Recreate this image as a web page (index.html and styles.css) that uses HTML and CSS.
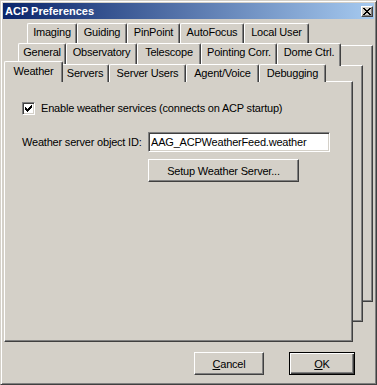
FILE: index.html
```html
<!DOCTYPE html>
<html lang="en">
  <head>
    <meta charset="UTF-8" />
    <meta name="viewport" content="width=device-width, initial-scale=1.0" />
    <title>ACP Preferences</title>
    <link rel="stylesheet" href="styles.css">
  </head>
  <body>
    <div class="window">
      <div class="titlebar">
        <span class="title">ACP Preferences</span>
        <button class="close" type="button">
          <svg width="8" height="7" viewBox="0 0 8 7" shape-rendering="crispEdges">
            <path d="M0 0h2v1H0zM6 0h2v1H6zM1 1h2v1H1zM5 1h2v1H5zM2 2h4v1H2zM3 3h2v1H3zM2 4h4v1H2zM1 5h2v1H1zM5 5h2v1H5zM0 6h2v1H0zM6 6h2v1H6z" />
          </svg>
        </button>
      </div>
      <div class="client">
        <div class="stack">
          <div class="layer layer-a">
            <div class="tabs row1">
              <div class="tab">Imaging</div>
              <div class="tab">Guiding</div>
              <div class="tab">PinPoint</div>
              <div class="tab">AutoFocus</div>
              <div class="tab">Local User</div>
            </div>
            <div class="sheet"></div>
          </div>
          <div class="layer layer-b">
            <div class="tabs row2">
              <div class="tab">General</div>
              <div class="tab">Observatory</div>
              <div class="tab">Telescope</div>
              <div class="tab">Pointing Corr.</div>
              <div class="tab">Dome Ctrl.</div>
            </div>
            <div class="sheet"></div>
          </div>
          <div class="layer layer-c">
            <div class="tabs row3">
              <div class="tab active">Weather</div>
              <div class="tab">Servers</div>
              <div class="tab">Server Users</div>
              <div class="tab">Agent/Voice</div>
              <div class="tab">Debugging</div>
            </div>
            <div class="sheet">
              <label class="check-row">
                <span class="checkbox">
                  <svg width="7" height="7" viewBox="0 0 7 7" shape-rendering="crispEdges">
                    <path d="M0 2h1v3H0zM1 3h1v3H1zM2 4h1v3H2zM3 3h1v3H3zM4 2h1v3H4zM5 1h1v3H5zM6 0h1v3H6z" />
                  </svg>
                </span>
                <span>Enable weather services (connects on ACP startup)</span>
              </label>
              <div class="field-row">
                <span class="field-label">Weather server object ID:</span>
                <input class="textbox" type="text" value="AAG_ACPWeatherFeed.weather">
              </div>
              <div class="setup-row">
                <button class="btn setup" type="button">Setup Weather Server...</button>
              </div>
            </div>
          </div>
        </div>
        <div class="footer">
          <button class="btn cancel" type="button"><u>C</u>ancel</button>
          <button class="btn ok default" type="button"><u>O</u>K</button>
        </div>
      </div>
    </div>
  </body>
</html>
```

FILE: styles.css
```css
* {
  margin: 0;
  padding: 0;
  box-sizing: border-box;
}

body {
  background: #d4d0c8;
  font-family: "Liberation Sans", Arial, sans-serif;
  font-size: 11px;
  letter-spacing: -0.2px;
  color: #000;
}

.window {
  width: 377px;
  height: 385px;
  display: flex;
  flex-direction: column;
  background: #d4d0c8;
  border: 1px solid;
  border-color: #d4d0c8 #404040 #404040 #d4d0c8;
  box-shadow: inset 1px 1px #ffffff, inset -1px -1px #808080;
  padding: 2px;
}

.titlebar {
  height: 16px;
  display: flex;
  align-items: center;
  justify-content: space-between;
  padding: 0 1px 0 2px;
  background: linear-gradient(to right, #0a246a, #a6caf0);
}

.title {
  color: #fff;
  font-weight: bold;
  letter-spacing: 0;
  line-height: 16px;
}

.close {
  width: 12px;
  height: 11px;
  display: flex;
  align-items: center;
  justify-content: center;
  background: #d4d0c8;
  border: 1px solid;
  border-color: #ffffff #404040 #404040 #ffffff;
  box-shadow: inset -1px -1px #808080;
}

.client {
  flex: 1;
  display: flex;
  flex-direction: column;
  padding: 4px 0 0 1px;
}

.stack {
  display: grid;
}

.layer {
  grid-area: 1 / 1;
  display: flex;
  flex-direction: column;
  align-self: start;
  justify-self: start;
  isolation: isolate;
}

.layer-a {
  margin-left: 20px;
}

.layer-b {
  margin: 20px 0 0 10px;
}

.layer-c {
  margin-top: 38px;
}

.tabs {
  display: grid;
  height: 22px;
  position: relative;
  z-index: 1;
}

.row1 {
  grid-template-columns: 50px 50px 53px 64px 65px;
  padding-left: 3px;
}

.row2 {
  grid-template-columns: 48px 71px 64px 76px 64px;
  padding-left: 4px;
}

.row3 {
  grid-template-columns: 55px 48px 77px 73px 67px;
  padding-left: 2px;
  height: 20px;
}

.tab {
  height: 23px;
  align-self: start;
  background: #d4d0c8;
  border-left: 1px solid #ffffff;
  border-top: 1px solid #ffffff;
  border-right: 1px solid #404040;
  box-shadow: inset -1px 0 #808080;
  border-radius: 2px 2px 0 0;
  padding-top: 2px;
  line-height: 13px;
  text-align: center;
  white-space: nowrap;
}

.row3 .tab {
  height: 18px;
  align-self: end;
}

.row3 .tab.active {
  height: 21px;
  align-self: start;
  margin: 0 -2px;
  padding-top: 3px;
  position: relative;
  z-index: 1;
}

.sheet {
  width: 349px;
  height: 257px;
  background: #d4d0c8;
  border: 1px solid;
  border-color: #ffffff #404040 #404040 #ffffff;
  box-shadow: inset -1px -1px #808080;
}

.layer-c .sheet {
  height: 261px;
  padding: 20px 0 0 17px;
}

.check-row {
  display: flex;
  align-items: center;
  gap: 6px;
  line-height: 13px;
}

.checkbox {
  width: 13px;
  height: 13px;
  display: flex;
  align-items: center;
  justify-content: center;
  background: #fff;
  border: 1px solid;
  border-color: #808080 #ffffff #ffffff #808080;
  box-shadow: inset 1px 1px #404040, inset -1px -1px #d4d0c8;
}

.field-row {
  display: flex;
  align-items: center;
  margin-top: 17px;
}

.field-label {
  width: 126px;
}

.textbox {
  width: 182px;
  height: 20px;
  padding: 0 2px;
  font: inherit;
  letter-spacing: inherit;
  color: #000;
  background: #fff;
  border: 1px solid;
  border-color: #808080 #ffffff #ffffff #808080;
  box-shadow: inset 1px 1px #404040, inset -1px -1px #d4d0c8;
  outline: none;
}

.setup-row {
  margin: 7px 0 0 126px;
}

.btn {
  height: 23px;
  font: inherit;
  letter-spacing: inherit;
  color: #000;
  background: #d4d0c8;
  border: 1px solid;
  border-color: #ffffff #404040 #404040 #ffffff;
  box-shadow: inset -1px -1px #808080;
}

.setup {
  width: 151px;
}

.footer {
  display: flex;
  justify-content: flex-end;
  gap: 25px;
  margin-top: 10px;
  padding-right: 19px;
}

.cancel {
  width: 70px;
}

.ok {
  width: 66px;
}

.btn.default {
  border-color: #000;
  box-shadow: inset 1px 1px #ffffff, inset -1px -1px #404040, inset -2px -2px #808080;
}
```
